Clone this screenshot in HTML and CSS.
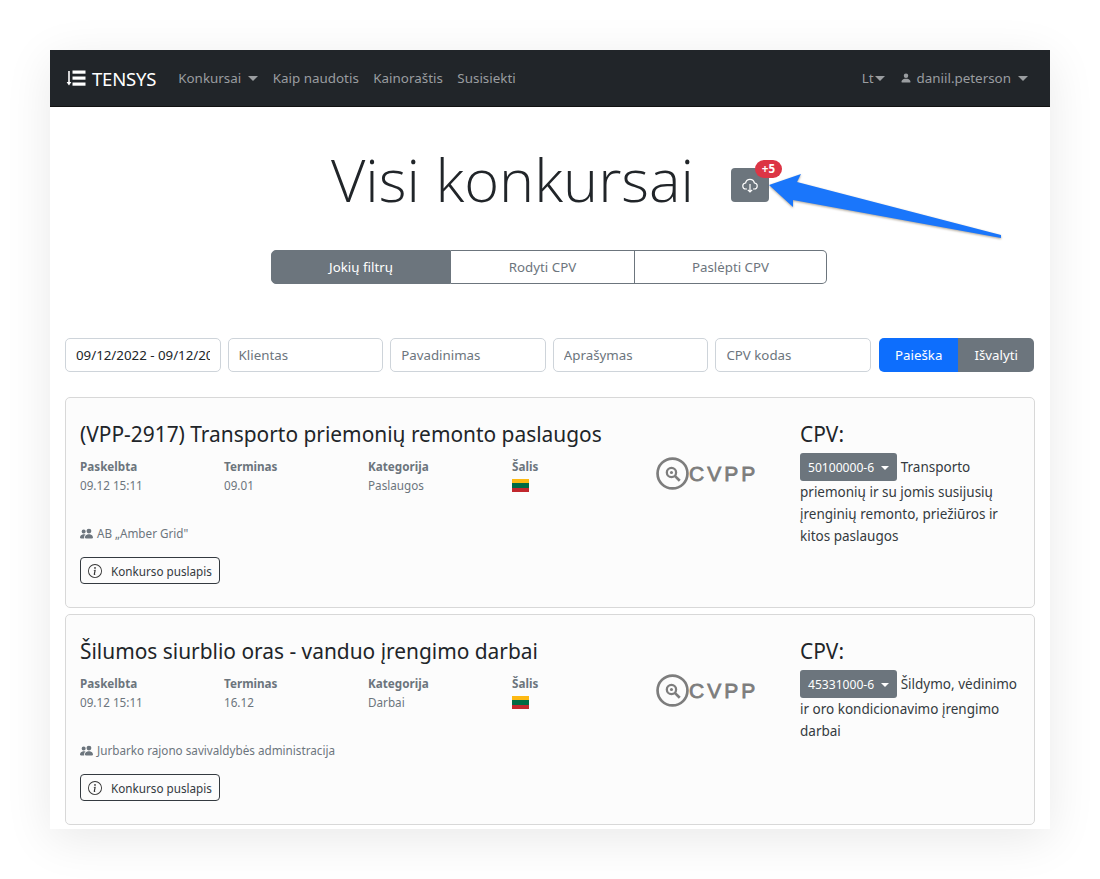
FILE: index.html
```html
<html>
<head>
	<title>Visi konkursai</title>
	<link rel="stylesheet" href="styles.css">
</head>
<body>
	<div class="page">
		<nav class="navbar">
			<a class="brand">
				<svg class="brand-icon" width="20" height="17" viewBox="0 0 20 17">
					<path d="M3 1v13" stroke="#fff" stroke-width="1.6" fill="none"/>
					<path d="M0.6 12l2.4 3.6L5.4 12z" fill="#fff"/>
					<rect x="6.5" y="0.5" width="13" height="3.2" fill="#fff"/>
					<rect x="6.5" y="6.5" width="13" height="3.2" fill="#fff"/>
					<rect x="6.5" y="12.5" width="13" height="3.2" fill="#fff"/>
				</svg>
				<span>TENSYS</span>
			</a>
			<a class="nav-link caret">Konkursai</a>
			<a class="nav-link">Kaip naudotis</a>
			<a class="nav-link">Kainoraštis</a>
			<a class="nav-link">Susisiekti</a>
			<div class="nav-right">
				<a class="nav-link caret tight">Lt</a>
				<a class="nav-link caret">
					<svg width="12" height="12" viewBox="0 0 16 16" fill="#9a9da0"><path d="M3 14s-1 0-1-1 1-4 6-4 6 3 6 4-1 1-1 1H3zm5-6a3 3 0 1 0 0-6 3 3 0 0 0 0 6z"/></svg>
					daniil.peterson
				</a>
			</div>
		</nav>

		<div class="content">
			<div class="heading">
				<h1>Visi konkursai</h1>
				<button class="cloud-btn">
					<svg width="16" height="16" viewBox="0 0 16 16" fill="none" stroke="#fff" stroke-width="1.2">
						<path d="M5 12H4a3 3 0 0 1-.4-6A4.5 4.5 0 0 1 12.4 6 3 3 0 0 1 12 12h-1"/>
						<path d="M8 7v8M5.8 12.8 8 15l2.2-2.2"/>
					</svg>
					<span class="badge">+5</span>
				</button>
			</div>

			<div class="btn-group">
				<button class="tab active">Jokių filtrų</button>
				<button class="tab mid">Rodyti CPV</button>
				<button class="tab last">Paslėpti CPV</button>
			</div>

			<div class="filters">
				<input class="field" type="text" value="09/12/2022 - 09/12/2022">
				<input class="field" type="text" placeholder="Klientas">
				<input class="field" type="text" placeholder="Pavadinimas">
				<input class="field" type="text" placeholder="Aprašymas">
				<input class="field" type="text" placeholder="CPV kodas">
				<div class="search-btns">
					<button class="btn-search">Paieška</button>
					<button class="btn-clear">Išvalyti</button>
				</div>
			</div>

			<div class="card">
				<div class="card-main">
					<h4>(VPP-2917) Transporto priemonių remonto paslaugos</h4>
					<div class="meta">
						<div><b>Paskelbta</b><span>09.12 15:11</span></div>
						<div><b>Terminas</b><span>09.01</span></div>
						<div><b>Kategorija</b><span>Paslaugos</span></div>
						<div><b>Šalis</b><i class="flag"></i></div>
					</div>
					<div class="client">
						<svg width="13" height="13" viewBox="0 0 16 16" fill="#6c757d"><path d="M7 14s-1 0-1-1 1-4 5-4 5 3 5 4-1 1-1 1H7zm4-6a3 3 0 1 0 0-6 3 3 0 0 0 0 6zM5.2 14A2.2 2.2 0 0 1 5 13c0-1.4.7-2.8 2-3.7A6.500 6.500 0 0 0 5 9c-4 0-5 3-5 4s1 1 1 1h4.200zM4.500 8a2.500 2.500 0 1 0 0-5 2.500 2.500 0 0 0 0 5z"/></svg>
						AB „Amber Grid"
					</div>
					<button class="btn-info">
						<svg width="14" height="14" viewBox="0 0 16 16" fill="#333"><path d="M8 15A7 7 0 1 1 8 1a7 7 0 0 1 0 14zm0 1A8 8 0 1 0 8 0a8 8 0 0 0 0 16z"/><path d="M8.900 6.600l-2.300.3-.1.400.5.100c.3.100.4.200.3.500l-.7 3.500c-.2.900.1 1.300.8 1.300.6 0 1.200-.3 1.500-.6l.1-.5c-.2.200-.5.300-.7.300-.3 0-.4-.2-.3-.5zM9 4.500a1 1 0 1 1-2 0 1 1 0 0 1 2 0z"/></svg>
						Konkurso puslapis
					</button>
				</div>
				<div class="logo">
					<svg width="33" height="33" viewBox="0 0 32 32" fill="none" stroke="#7d7d7d">
						<circle cx="16" cy="16" r="14.500" stroke-width="2.600"/>
						<circle cx="15" cy="15" r="4.500" stroke-width="2.200"/>
						<path d="M18.500 18.500 23 23" stroke-width="2.600"/>
						<circle cx="15" cy="15" r="1.500" fill="#7d7d7d" stroke="none"/>
					</svg>
					<span>CVPP</span>
				</div>
				<div class="cpv">
					<h4>CPV:</h4>
					<p><button class="cpv-code">50100000-6</button> <span>Transporto</span> <span>priemonių ir su jomis susijusių įrenginių remonto, priežiūros ir kitos paslaugos</span></p>
				</div>
			</div>

			<div class="card">
				<div class="card-main">
					<h4>Šilumos siurblio oras - vanduo įrengimo darbai</h4>
					<div class="meta">
						<div><b>Paskelbta</b><span>09.12 15:11</span></div>
						<div><b>Terminas</b><span>16.12</span></div>
						<div><b>Kategorija</b><span>Darbai</span></div>
						<div><b>Šalis</b><i class="flag"></i></div>
					</div>
					<div class="client">
						<svg width="13" height="13" viewBox="0 0 16 16" fill="#6c757d"><path d="M7 14s-1 0-1-1 1-4 5-4 5 3 5 4-1 1-1 1H7zm4-6a3 3 0 1 0 0-6 3 3 0 0 0 0 6zM5.2 14A2.2 2.2 0 0 1 5 13c0-1.4.7-2.8 2-3.7A6.500 6.500 0 0 0 5 9c-4 0-5 3-5 4s1 1 1 1h4.200zM4.500 8a2.500 2.500 0 1 0 0-5 2.500 2.500 0 0 0 0 5z"/></svg>
						Jurbarko rajono savivaldybės administracija
					</div>
					<button class="btn-info">
						<svg width="14" height="14" viewBox="0 0 16 16" fill="#333"><path d="M8 15A7 7 0 1 1 8 1a7 7 0 0 1 0 14zm0 1A8 8 0 1 0 8 0a8 8 0 0 0 0 16z"/><path d="M8.900 6.600l-2.300.3-.1.400.5.100c.3.100.4.200.3.500l-.7 3.500c-.2.900.1 1.300.8 1.300.6 0 1.200-.3 1.500-.6l.1-.5c-.2.200-.5.300-.7.300-.3 0-.4-.2-.3-.5zM9 4.500a1 1 0 1 1-2 0 1 1 0 0 1 2 0z"/></svg>
						Konkurso puslapis
					</button>
				</div>
				<div class="logo">
					<svg width="33" height="33" viewBox="0 0 32 32" fill="none" stroke="#7d7d7d">
						<circle cx="16" cy="16" r="14.500" stroke-width="2.600"/>
						<circle cx="15" cy="15" r="4.500" stroke-width="2.200"/>
						<path d="M18.500 18.500 23 23" stroke-width="2.600"/>
						<circle cx="15" cy="15" r="1.500" fill="#7d7d7d" stroke="none"/>
					</svg>
					<span>CVPP</span>
				</div>
				<div class="cpv">
					<h4>CPV:</h4>
					<p><button class="cpv-code">45331000-6</button> <span>Šildymo, vėdinimo</span> <span>ir oro kondicionavimo įrengimo darbai</span></p>
				</div>
			</div>
		</div>

		<!-- arrow sits over the page -->
		<svg class="arrow" width="250" height="80" viewBox="0 0 250 80">
			<polygon points="10,21 42,10 38,18 242,71 242,74 34,36 34,43" fill="#1a76fb" style="filter: drop-shadow(0 1px 1px rgba(90,70,40,.5))"/>
		</svg>
	</div>
</body>
</html>
```

FILE: styles.css
```css
* {
	box-sizing: border-box;
}
html, body {
	margin: 0;
	background-color: #ffffff;
}
body {
	height: 879px;
	overflow: hidden;
	padding: 50px;
	font-family: 'Noto Sans', 'Open Sans', sans-serif;
	font-size: 13.3px;
	color: #212529;
}
button {
	font-family: inherit;
	cursor: pointer;
}
.page {
	position: relative;
	width: 1000px;
	height: 779px;
	background-color: #ffffff;
	box-shadow: 0 10px 45px rgba(0, 0, 0, 0.09);
}
.navbar {
	display: flex;
	align-items: center;
	height: 57px;
	padding: 0 15px 0 16px;
	background-color: #212529;
	border-bottom: 1px solid #111;
}
.brand {
	display: flex;
	align-items: center;
	gap: 6px;
	margin-right: 15px;
	color: #ffffff;
	font-size: 18.5px;
	letter-spacing: -0.2px;
}
.nav-link {
	display: flex;
	align-items: center;
	gap: 5px;
	padding: 0 7px;
	color: #9a9da0;
	font-size: 13.4px;
	white-space: nowrap;
}
.navbar > .nav-link + .nav-link {
	margin-left: 0.5px;
}
.caret::after {
	content: "";
	margin-left: 2px;
	border-top: 5px solid #9a9da0;
	border-left: 5px solid transparent;
	border-right: 5px solid transparent;
}
.tight::after {
	margin-left: -4px;
}
.nav-right {
	display: flex;
	margin-left: auto;
	gap: 1px;
}
.content {
	padding: 0 15px;
}
.heading {
	display: flex;
	justify-content: center;
	align-items: center;
	height: 143px;
}
.heading h1 {
	margin: 0;
	font-family: 'Open Sans', sans-serif;
	font-weight: 300;
	font-size: 59.5px;
	color: #212529;
	line-height: 1;
}
.cloud-btn {
	position: relative;
	width: 38px;
	height: 34px;
	margin: 12px 0 0 37px;
	padding: 0;
	background-color: #6c757d;
	border: none;
	border-radius: 4px;
}
.cloud-btn svg {
	display: block;
	margin: 0 auto;
}
.badge {
	position: absolute;
	top: -8px;
	right: -13px;
	padding: 1px 7px;
	background-color: #dc3545;
	color: #ffffff;
	font-size: 11.500px;
	font-weight: 700;
	line-height: 16px;
	border-radius: 9px;
}
.btn-group {
	display: flex;
	justify-content: center;
	margin-right: 2px;
}
.tab {
	height: 34px;
	background-color: #ffffff;
	color: #6c757d;
	border: 1px solid #6c757d;
	border-left: none;
	font-size: 13.3px;
}
.tab.active {
	width: 180px;
	background-color: #6c757d;
	color: #ffffff;
	border-left: 1px solid #6c757d;
	border-radius: 5px 0 0 5px;
}
.tab.mid {
	width: 184px;
}
.tab.last {
	width: 192px;
	border-radius: 0 5px 5px 0;
}
.filters {
	display: flex;
	align-items: center;
	gap: 7px;
	margin-top: 54px;
	margin-right: 1px;
}
.field {
	flex: 1 1 0;
	min-width: 0;
	height: 34px;
	padding: 0 10px;
	background-color: #ffffff;
	border: 1px solid #ced4da;
	border-radius: 5px;
	color: #212529;
	font-family: inherit;
	font-size: 13.3px;
}
.field::placeholder {
	color: #6c757d;
}
.search-btns {
	display: flex;
	flex: 0 0 155px;
	height: 34px;
	margin-left: 1px;
}
.btn-search, .btn-clear {
	flex: 1 1 auto;
	color: #ffffff;
	border: none;
	font-size: 13.3px;
}
.btn-search {
	background-color: #0d6efd;
	border-radius: 5px 0 0 5px;
}
.btn-clear {
	background-color: #6c757d;
	border-radius: 0 5px 5px 0;
}
.card {
	display: grid;
	grid-template-columns: 575px 145px 1fr;
	margin-top: 6px;
	padding: 23px 14px 12px;
	background-color: #fcfcfc;
	border: 1px solid #d8d8d8;
	border-radius: 5px;
	min-height: 211px;
}
.filters + .card {
	margin-top: 25px;
}
h4 {
	margin: 0;
	font-weight: 400;
	font-size: 20.9px;
	line-height: 26px;
	color: #212529;
}
.meta {
	display: grid;
	grid-template-columns: repeat(4, 144px);
	margin-top: 10px;
	font-size: 11.7px;
	color: #6c757d;
	line-height: 19px;
}
.meta b, .meta span {
	display: block;
}
.flag {
	display: block;
	width: 17px;
	height: 13px;
	margin-top: 3px;
	background: linear-gradient(#fdb913 0 33%, #006a44 33% 66%, #c1272d 66%);
}
.client {
	display: flex;
	align-items: center;
	gap: 4px;
	margin-top: 29px;
	font-size: 11.7px;
	color: #6c757d;
	line-height: 18px;
}
.btn-info {
	display: flex;
	align-items: center;
	gap: 9px;
	height: 27px;
	margin-top: 15px;
	padding: 0 7px;
	background-color: transparent;
	border: 1px solid #343a40;
	border-radius: 4px;
	color: #343a40;
	font-size: 11.7px;
}
.logo {
	display: flex;
	align-items: center;
	height: 33px;
	margin-top: 36px;
	margin-left: 1px;
	color: #7d7d7d;
}
.logo span {
	font-family: 'Liberation Sans', sans-serif;
	font-size: 21px;
	letter-spacing: 3px;
	-webkit-text-stroke: 0.8px #7d7d7d;
}
.cpv h4 {
	margin-bottom: 6px;
}
.cpv p {
	margin: 0;
	font-size: 13.5px;
	line-height: 22px;
	color: #343a40;
}
.cpv-code {
	height: 28px;
	padding: 0 8px;
	background-color: #6c757d;
	color: #ffffff;
	border: none;
	border-radius: 3px;
	font-size: 12.1px;
}
.cpv-code::after {
	content: "";
	display: inline-block;
	margin-left: 7px;
	vertical-align: 2px;
	border-top: 4px solid #ffffff;
	border-left: 4px solid transparent;
	border-right: 4px solid transparent;
}
.arrow {
	position: absolute;
	left: 709px;
	top: 114px;
	overflow: visible;
}
```
